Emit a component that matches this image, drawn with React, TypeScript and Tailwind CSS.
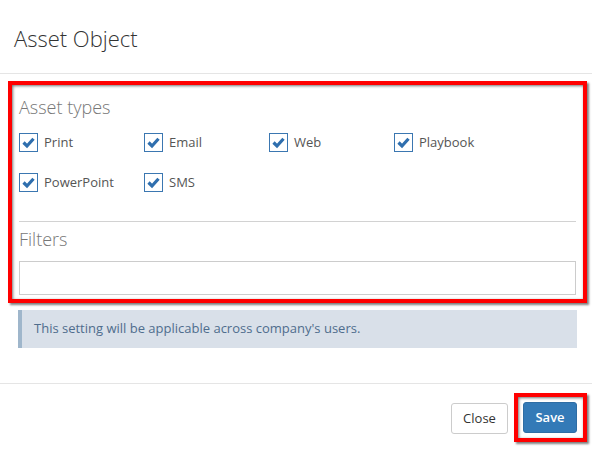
import { useState } from 'react';

const assetTypes = ['Print', 'Email', 'Web', 'Playbook', 'PowerPoint', 'SMS'];

const CheckBox = ({ checked }: { checked: boolean }) => (
  <span className="flex h-[19px] w-[19px] shrink-0 items-center justify-center border-[1.5px] border-[#3b77b1] bg-white">
    {checked && (
      <svg width="15" height="15" viewBox="0 0 15 15">
        <path d="M2.5 7.5 L6 11 L12.5 3.8" fill="none" stroke="#2f6fae" strokeWidth="3.2" />
      </svg>
    )}
  </span>
);

const App = () => {
  const [selected, setSelected] = useState<string[]>(assetTypes);

  const toggle = (name: string) => {
    setSelected(selected.includes(name) ? selected.filter(s => s !== name) : [...selected, name]);
  };

  return (
    <div className="flex h-[449px] w-[592px] flex-col bg-white font-['Open_Sans',sans-serif] text-[#333]">
      {/* Header */}
      <div className="h-[74px] border-b border-[#e5e5e5] pl-[14px] pt-[24px]">
        <h4 className="text-[22px] font-light leading-[28px] text-[#333]">Asset Object</h4>
      </div>

      {/* Body */}
      <div className="flex flex-col pl-[8px] pr-[5px] pt-[7px]">
        <div className="h-[222px] border-4 border-[#f00] px-[7px] pb-[4px] pt-[10px] shadow-[inset_1px_1px_3px_rgba(0,0,0,0.55),2px_2px_2px_rgba(0,0,0,0.5)]">
          <div className="text-[18px] font-light leading-[24px] text-[#777]">Asset types</div>
          <div className="mt-[14px] grid grid-cols-[125px_125px_125px_125px] gap-y-[21px]">
            {assetTypes.map(name => (
              <label
                key={name}
                className="flex h-[19px] cursor-pointer items-center gap-[6px] text-[13px] text-[#555]"
                onClick={() => toggle(name)}
              >
                <CheckBox checked={selected.includes(name)} />
                <span>{name}</span>
              </label>
            ))}
          </div>
          <div className="mt-[29px] h-px bg-[#d2d2d2]" />
          <div className="mt-[5px] text-[18px] font-light leading-[24px] text-[#777]">Filters</div>
          <input className="mt-[10px] h-[34px] w-full border border-[#ccc] bg-white px-2 text-[13px] outline-none" />
        </div>
      </div>

      <div className="mb-[35px] ml-[18px] mr-[15px] mt-[7px] flex h-[38px] items-center border-l-4 border-[#9fb6cb] bg-[#d9e0e9] pl-[12px] text-[13px] text-[#4f6d8d]">
        This setting will be applicable across company's users.
      </div>

      {/* Footer */}
      <div className="flex flex-1 items-start justify-end border-t border-[#e5e5e5] pr-[5px] pt-[9px]">
        <button className="mt-[10px] h-[31px] w-[57px] rounded-[3px] border border-[#ccc] bg-white text-[13px] text-[#333]">
          Close
        </button>
        <div className="ml-[6px] border-4 border-[#f00] py-[5px] pl-[5px] pr-[6px] shadow-[inset_1px_1px_3px_rgba(0,0,0,0.55),2px_2px_2px_rgba(0,0,0,0.5)]">
          <button className="h-[31px] w-[54px] rounded-[3px] border border-[#2e6da4] bg-[#337ab7] text-[13px] font-semibold text-white">
            Save
          </button>
        </div>
      </div>
    </div>
  );
};

export default App;
